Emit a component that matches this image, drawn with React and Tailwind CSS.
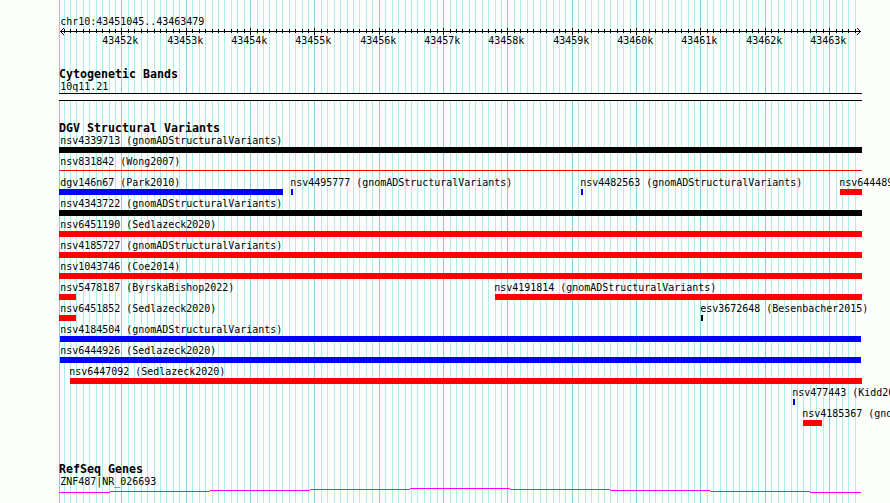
import React from 'react';

// Visible region of chr10 and the panel it is drawn in
const START = 43451045;
const END = 43463479;
const LEFT = 59;

const toX = (pos) => Math.round(59.98 + ((pos - START) * 800) / (END - START));

const ticks = [];
for (let pos = 43451100; pos <= END; pos += 100) {
    ticks.push({ pos, x: toX(pos), major: pos % 1000 === 0 });
}
const majorTicks = ticks.filter((t) => t.major);

const colors = {
    black: 'bg-black',
    red: 'bg-[#ff0000]',
    blue: 'bg-[#0000ff]',
};

const variantRows = [
    [{ name: 'nsv4339713 (gnomADStructuralVariants)', from: 59, to: 862, color: 'black' }],
    [{ name: 'nsv831842 (Wong2007)', from: 59, to: 862, color: 'red', thin: true }],
    [
        { name: 'dgv146n67 (Park2010)', from: 59, to: 283, color: 'blue' },
        { name: 'nsv4495777 (gnomADStructuralVariants)', label: 290, from: 291, to: 293, color: 'blue' },
        { name: 'nsv4482563 (gnomADStructuralVariants)', label: 580, from: 581, to: 583, color: 'blue' },
        { name: 'nsv6444892 (Sedlazeck2020)', label: 839, from: 840, to: 862, color: 'red' },
    ],
    [{ name: 'nsv4343722 (gnomADStructuralVariants)', from: 59, to: 862, color: 'black' }],
    [{ name: 'nsv6451190 (Sedlazeck2020)', from: 59, to: 862, color: 'red' }],
    [{ name: 'nsv4185727 (gnomADStructuralVariants)', from: 59, to: 862, color: 'red' }],
    [{ name: 'nsv1043746 (Coe2014)', from: 59, to: 862, color: 'red' }],
    [
        { name: 'nsv5478187 (ByrskaBishop2022)', from: 59, to: 76, color: 'red' },
        { name: 'nsv4191814 (gnomADStructuralVariants)', label: 494, from: 495, to: 862, color: 'red' },
    ],
    [
        { name: 'nsv6451852 (Sedlazeck2020)', from: 59, to: 76, color: 'red' },
        { name: 'esv3672648 (Besenbacher2015)', label: 700, from: 701, to: 703, color: 'black' },
    ],
    [{ name: 'nsv4184504 (gnomADStructuralVariants)', from: 60, to: 861, color: 'blue' }],
    [{ name: 'nsv6444926 (Sedlazeck2020)', from: 60, to: 861, color: 'blue' }],
    [{ name: 'nsv6447092 (Sedlazeck2020)', label: 69, from: 70, to: 862, color: 'red' }],
    [{ name: 'nsv477443 (Kidd2008)', label: 792, from: 793, to: 795, color: 'blue' }],
    [{ name: 'nsv4185367 (gnomADStructuralVariants)', label: 802, from: 803, to: 822, color: 'red' }],
];

// The gene's intron arches up by one pixel per step
const geneSteps = [
    [59, 110, 4],
    [110, 210, 3],
    [210, 310, 2],
    [310, 410, 1],
    [410, 510, 0],
    [510, 610, 1],
    [610, 710, 2],
    [710, 810, 3],
    [810, 861, 4],
];

const GridLines = () => (
    <svg className="absolute inset-0" width="890" height="503" shapeRendering="crispEdges">
        <rect x={LEFT} y="0" width="1" height="503" fill="#87ceeb" />
        {ticks.map((t) => (
            <rect key={t.pos} x={t.x} y="0" width="1" height="503" fill={t.major ? '#87ceeb' : '#afeeee'} />
        ))}
    </svg>
);

const Label = ({ x = 60, children }) => (
    <div className="h-3 w-0 leading-[14px] whitespace-nowrap" style={{ marginLeft: x + 0.3 }}>
        {children}
    </div>
);

const Title = ({ children }) => (
    <h2 className="h-3 pl-[59px] text-[11.63px] leading-3 font-bold tracking-normal whitespace-nowrap">{children}</h2>
);

const Ruler = () => (
    <svg className="block h-[7px] w-full" shapeRendering="crispEdges">
        <rect x="60" y="3" width="801" height="1" />
        {ticks.map((t) => (
            <rect key={t.pos} x={t.x} y={t.major ? 0 : 1} width="1" height={t.major ? 7 : 4} />
        ))}
        {/* Arrowheads, one pixel per step */}
        {[-3, -2, -1, 1, 2, 3].map((d) => (
            <g key={d}>
                <rect x={60 + Math.abs(d)} y={3 + d} width="1" height="1" />
                <rect x={860 - Math.abs(d)} y={3 + d} width="1" height="1" />
            </g>
        ))}
    </svg>
);

const Variant = ({ feature }) => (
    <div className="col-start-1 row-start-1">
        <Label x={feature.label}>{feature.name}</Label>
        <div
            className={`${feature.thin ? 'mt-[3px] h-px' : 'mt-px h-1.5'} ${colors[feature.color]}`}
            style={{ marginLeft: feature.from, width: feature.to - feature.from }}
        />
    </div>
);

const App = () => (
    <div className="relative h-[503px] w-[890px] overflow-hidden bg-[#fdfffc] font-['DejaVu_Sans_Mono',monospace] text-[10px] tracking-[-0.02px] text-black">
        <GridLines />
        <main className="relative flex flex-col pt-[15px]">
            {/* Scale */}
            <Label>chr10:43451045..43463479</Label>
            <div className="mt-px">
                <Ruler />
            </div>
            <div className="-mt-px grid h-[13px]">
                {majorTicks.map((t) => (
                    <div key={t.pos} className="col-start-1 row-start-1">
                        <Label x={t.x - 19}>{t.pos / 1000}k</Label>
                    </div>
                ))}
            </div>

            {/* Cytogenetic bands */}
            <section className="mt-[21px]">
                <Title>Cytogenetic Bands</Title>
                <Label>10q11.21</Label>
                <div className="mt-px ml-[59px] h-2 w-[803px] border-y border-black bg-[#fdfffc]" />
            </section>

            {/* Structural variants */}
            <section className="mt-[21px]">
                <Title>DGV Structural Variants</Title>
                {variantRows.map((row) => (
                    <div key={row[0].name} className="grid h-[21px] grid-cols-1">
                        {row.map((feature) => (
                            <Variant key={feature.name} feature={feature} />
                        ))}
                    </div>
                ))}
            </section>

            {/* Genes */}
            <section className="mt-[35px]">
                <Title>RefSeq Genes</Title>
                <Label>ZNF487|NR_026693</Label>
                <svg className="mt-px block h-[5px] w-full" shapeRendering="crispEdges">
                    {geneSteps.map(([from, to, y]) => (
                        <rect key={from} x={from} y={y} width={to - from} height="1" fill="#ff00ff" />
                    ))}
                </svg>
            </section>
        </main>
    </div>
);

export default App;
